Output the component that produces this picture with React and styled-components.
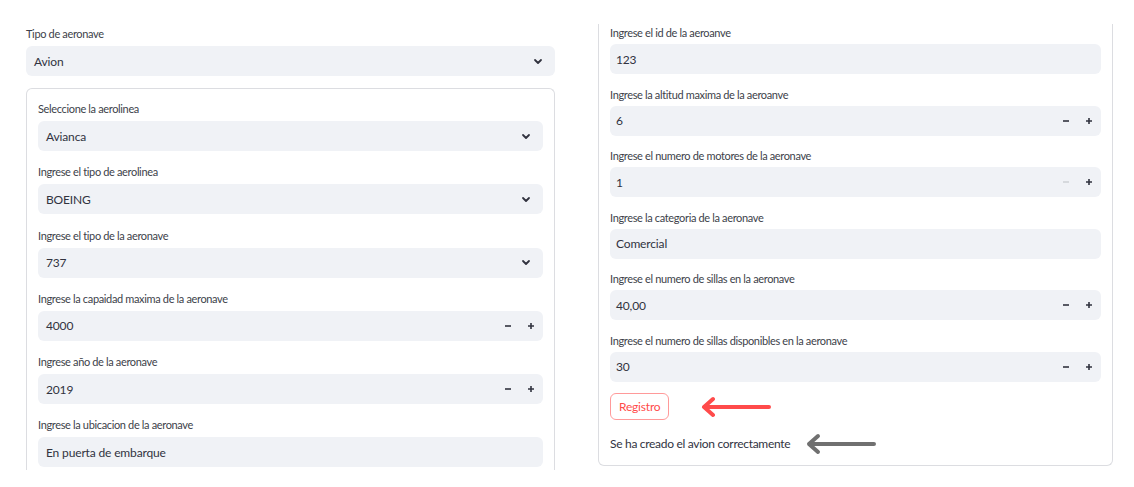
import React from "react";
import styled, { createGlobalStyle } from "styled-components";

const GlobalStyle = createGlobalStyle`
  html, body {
    margin: 0;
    padding: 0;
    background: #ffffff;
  }
  body {
    font-family: Lato, "Noto Sans", sans-serif;
    color: #31333f;
  }
`;

const Page = styled.div`
  display: grid;
  grid-template-columns: 529px 515px;
  column-gap: 43px;
  padding-left: 26px;
  align-items: start;
  height: 487px;
  box-sizing: border-box;
`;

const Column = styled.div`
  display: flex;
  flex-direction: column;
  gap: 12px;
  padding-top: ${(p) => p.top || 0}px;
`;

const Card = styled.div`
  display: flex;
  flex-direction: column;
  gap: ${(p) => p.gap}px;
  border: 1px solid #dcdde1;
  ${(p) => (p.cutTop ? "border-top: none;" : "")}
  ${(p) => (p.cutBottom ? "border-bottom: none;" : "")}
  border-radius: ${(p) =>
    p.cutTop ? "0 0 6px 6px" : p.cutBottom ? "6px 6px 0 0" : "6px"};
  padding: ${(p) => p.pad};
`;

const Field = styled.div`
  display: flex;
  flex-direction: column;
  gap: ${(p) => p.gap || 5}px;
`;

const Label = styled.label`
  font-size: 11px;
  line-height: 14px;
  letter-spacing: -0.35px;
  color: #3d3f4a;
`;

const Box = styled.div`
  display: flex;
  align-items: center;
  height: 30px;
  background: #f0f2f6;
  border-radius: 6px;
  padding: 0 ${(p) => (p.tight ? 8 : 12)}px 0 ${(p) => p.inset || 8}px;
  box-sizing: border-box;
  font-size: 12px;
  color: #31333f;
`;

const Value = styled.span`
  flex: 1;
  letter-spacing: -0.15px;
`;

const Stepper = styled.div`
  display: flex;
  align-items: center;
  gap: 15px;
`;

const StepIcon = styled.svg`
  display: block;
  width: 8px;
  height: 8px;
`;

const Actions = styled.div`
  display: flex;
  flex-direction: column;
  gap: 13px;
  margin-top: -2px;
`;

const Row = styled.div`
  display: flex;
  align-items: center;
  gap: ${(p) => p.gap}px;
`;

const Button = styled.button`
  height: 27px;
  padding: 0 8px;
  background: #ffffff;
  border: 1px solid #ff9a9a;
  border-radius: 6px;
  color: #ff4b4b;
  font-family: Lato, "Noto Sans", sans-serif;
  font-size: 12px;
  letter-spacing: -0.2px;
  cursor: pointer;
`;

const Message = styled.p`
  margin: 0;
  font-size: 12px;
  line-height: 16px;
  letter-spacing: -0.3px;
  color: #31333f;
`;

const Chevron = () => (
  <svg width="10" height="7" viewBox="0 0 10 7">
    <path
      d="M2 2 L5 5 L8 2"
      fill="none"
      stroke="#31333f"
      strokeWidth="1.8"
      strokeLinecap="round"
      strokeLinejoin="round"
    />
  </svg>
);

const Minus = ({ disabled }) => (
  <StepIcon viewBox="0 0 8 8">
    <path
      d="M1 4 H7"
      stroke={disabled ? "#d0d2d8" : "#31333f"}
      strokeWidth="1.6"
    />
  </StepIcon>
);

const Plus = () => (
  <StepIcon viewBox="0 0 8 8">
    <path d="M1 4 H7 M4 1 V7" stroke="#31333f" strokeWidth="1.6" />
  </StepIcon>
);

const Arrow = ({ color }) => (
  <svg width="72" height="22" viewBox="0 0 72 22">
    <path
      d="M69 11 H4 M13 3 L4 11 L13 19"
      fill="none"
      stroke={color}
      strokeWidth="4"
      strokeLinecap="round"
      strokeLinejoin="round"
    />
  </svg>
);

const Select = ({ label, value, gap, inset }) => (
  <Field gap={gap}>
    <Label>{label}</Label>
    <Box inset={inset}>
      <Value>{value}</Value>
      <Chevron />
    </Box>
  </Field>
);

const TextInput = ({ label, value, gap, inset }) => (
  <Field gap={gap}>
    <Label>{label}</Label>
    <Box inset={inset}>
      <Value>{value}</Value>
    </Box>
  </Field>
);

const NumberInput = ({ label, value, gap, inset, minDisabled }) => (
  <Field gap={gap}>
    <Label>{label}</Label>
    <Box tight inset={inset}>
      <Value>{value}</Value>
      <Stepper>
        <Minus disabled={minDisabled} />
        <Plus />
      </Stepper>
    </Box>
  </Field>
);

const rightFields = [
  { kind: "text", label: "Ingrese el id de la aeroanve", value: "123" },
  { kind: "number", label: "Ingrese la altitud maxima de la aeroanve", value: "6" },
  {
    kind: "number",
    label: "Ingrese el numero de motores de la aeronave",
    value: "1",
    minDisabled: true,
  },
  { kind: "text", label: "Ingrese la categoria de la aeronave", value: "Comercial" },
  { kind: "number", label: "Ingrese el numero de sillas en la aeronave", value: "40,00" },
  {
    kind: "number",
    label: "Ingrese el numero de sillas disponibles en la aeronave",
    value: "30",
  },
];

export default function App() {
  return (
    <>
      <GlobalStyle />
      <Page>
        <Column top={27}>
          <Select label="Tipo de aeronave" value="Avion" />
          <Card gap={14.3} pad="13px 11px 3px" cutBottom>
            <Select label="Seleccione la aerolinea" value="Avianca" />
            <Select label="Ingrese el tipo de aerolinea" value="BOEING" />
            <Select label="Ingrese el tipo de la aeronave" value="737" />
            <NumberInput
              label="Ingrese la capaidad maxima de la aeronave"
              value="4000"
            />
            <NumberInput label="Ingrese año de la aeronave" value="2019" />
            <TextInput
              label="Ingrese la ubicacion de la aeronave"
              value="En puerta de embarque"
            />
          </Card>
        </Column>
        <Column top={24}>
          <Card gap={13.5} pad="2px 11px 10px" cutTop>
            {rightFields.map((f) =>
              f.kind === "text" ? (
                <TextInput key={f.label} gap={4} inset={6} label={f.label} value={f.value} />
              ) : (
                <NumberInput
                  key={f.label}
                  gap={4}
                  inset={6}
                  label={f.label}
                  value={f.value}
                  minDisabled={f.minDisabled}
                />
              )
            )}
            <Actions>
              <Row gap={31}>
                <Button>Registro</Button>
                <Arrow color="#ff4b4b" />
              </Row>
              <Row gap={15}>
                <Message>Se ha creado el avion correctamente</Message>
                <Arrow color="#707070" />
              </Row>
            </Actions>
          </Card>
        </Column>
      </Page>
    </>
  );
}
